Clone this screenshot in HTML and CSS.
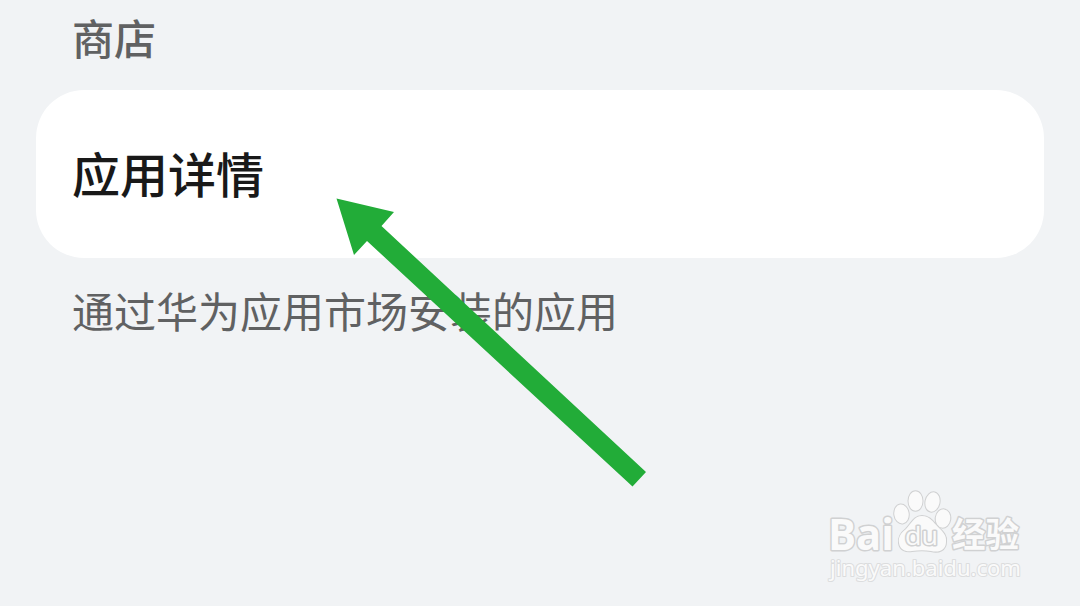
FILE: index.html
```
<!DOCTYPE html>
<html lang="zh-CN">
<head>
    <meta charset="UTF-8">
    <meta name="viewport" content="width=device-width, initial-scale=1.0">
    <title>应用详情</title>
    <link rel="stylesheet" href="styles.css">
</head>
<body>
    <main class="settings">
        <h2 class="section-title">商店</h2>
        <div class="card">
            <span class="card-label">应用详情</span>
        </div>
        <p class="section-note">通过华为应用市场安装的应用</p>
    </main>

    <svg class="arrow" width="310" height="289" viewBox="0 0 310 289">
        <path d="M0.5 0.5 L58 14 L45.500 28 L310 274 L296.500 288.500 L31 43 L18 57 Z"/>
    </svg>

    <svg class="watermark" width="210" height="110" viewBox="0 0 210 110">
        <text class="brand" x="8" y="70" font-size="43" textLength="66" lengthAdjust="spacingAndGlyphs">Bai</text>
        <g class="paw">
            <ellipse cx="81.500" cy="34" rx="7.200" ry="9.500" transform="rotate(-8 81.500 34)"/>
            <ellipse cx="95.500" cy="21" rx="7" ry="9.800"/>
            <ellipse cx="112.500" cy="22" rx="7" ry="9.800" transform="rotate(12 112.500 22)"/>
            <ellipse cx="123" cy="38.500" rx="7.300" ry="9.200" transform="rotate(8 123 38.500)"/>
            <path d="M102 36 C94 36 91 44 86 49 C81 53 78 57 79 63 C80 70 86 72 92 71 C99 70 105 70 111 71 C119 73 126 70 126 62 C127 55 122 51 118 47 C113 42 110 36 102 36 Z"/>
        </g>
        <text class="du" x="85" y="65" font-size="25" textLength="33" lengthAdjust="spacingAndGlyphs">du</text>
        <text class="brand" x="132" y="67" font-size="34" textLength="67" lengthAdjust="spacingAndGlyphs">经验</text>
        <text class="site" x="10" y="96" font-size="21" textLength="191" lengthAdjust="spacingAndGlyphs">jingyan.baidu.com</text>
    </svg>
</body>
</html>
```
FILE: styles.css
```
body {
    margin: 0;
    height: 606px;
    overflow: hidden;
    position: relative;
    background-color: #f1f3f5;
    font-family: "Noto Sans CJK SC", sans-serif;
}

.settings {
    padding: 7px 36px 0;
}

.section-title {
    margin: 0 0 23px;
    padding: 0 36px;
    font-size: 42px;
    font-weight: 500;
    line-height: 60px;
    color: #606162;
}

.card {
    display: flex;
    align-items: center;
    box-sizing: border-box;
    height: 168px;
    padding: 0 36px 5px;
    border-radius: 48px;
    background-color: #fff;
}

.card-label {
    font-size: 48px;
    font-weight: 500;
    line-height: 72px;
    color: #191919;
}

.section-note {
    margin: 22px 0 0;
    padding: 0 36px;
    font-size: 42px;
    line-height: 60px;
    color: #606162;
}

/* Flecha sobre la tarjeta */
.arrow {
    position: absolute;
    left: 336px;
    top: 198px;
    fill: #22ac38;
}

.watermark {
    position: absolute;
    left: 820px;
    top: 480px;
    fill: #fafafa;
    stroke: #d0d1d2;
    stroke-width: 2;
    stroke-linejoin: round;
    paint-order: stroke;
}

.brand {
    font-family: "Open Sans", "Noto Sans CJK SC", sans-serif;
    font-weight: 700;
    stroke-width: 3;
}

.du {
    font-family: "Open Sans", sans-serif;
    font-weight: 400;
    stroke-width: 3;
}

.site {
    font-family: "Noto Sans", sans-serif;
    font-weight: 400;
    stroke: #dcddde;
    stroke-width: 2;
}
```
